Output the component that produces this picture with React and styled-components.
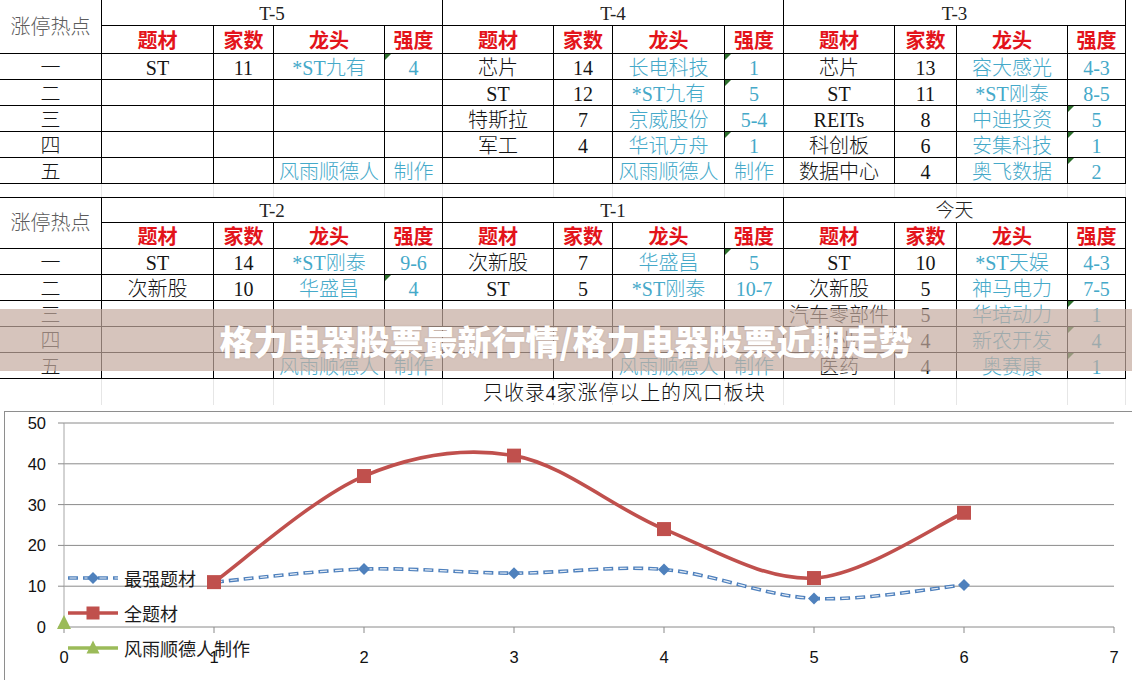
import React from 'react'
import styled, { createGlobalStyle } from 'styled-components'

const GlobalStyle = createGlobalStyle`
  html, body { margin: 0; padding: 0; background: #fff; }
  body { width: 1132px; height: 680px; overflow: hidden; }
`

const COLS = '101px 111px 59px 110px 57px 110px 58px 111px 58px 110px 61px 110px 57px'
const HEADS = ['题材', '家数', '龙头', '强度']
const LABELS = ['一', '二', '三', '四', '五']
const SIGN = ['', '', '风雨顺德人', '制作']

const topGroups = [
  { title: 'T-5', rows: [['ST', '11', '*ST九有', '4', true], [], [], [], SIGN] },
  { title: 'T-4', rows: [['芯片', '14', '长电科技', '1', true], ['ST', '12', '*ST九有', '5', true], ['特斯拉', '7', '京威股份', '5-4'], ['军工', '4', '华讯方舟', '1', true], SIGN] },
  { title: 'T-3', rows: [['芯片', '13', '容大感光', '4-3'], ['ST', '11', '*ST刚泰', '8-5'], ['REITs', '8', '中迪投资', '5', true], ['科创板', '6', '安集科技', '1', true], ['数据中心', '4', '奥飞数据', '2', true]] },
]

const bottomGroups = [
  { title: 'T-2', rows: [['ST', '14', '*ST刚泰', '9-6'], ['次新股', '10', '华盛昌', '4', true], [], [], SIGN] },
  { title: 'T-1', rows: [['次新股', '7', '华盛昌', '5', true], ['ST', '5', '*ST刚泰', '10-7'], [], [], SIGN] },
  { title: '今天', rows: [['ST', '10', '*ST天娱', '4-3'], ['次新股', '5', '神马电力', '7-5'], ['汽车零部件', '5', '华培动力', '1', true], ['农业', '4', '新农开发', '4', true], ['医药', '4', '奥赛康', '1', true]] },
]

const Page = styled.div`
  position: relative;
  width: 1132px;
  height: 680px;
  overflow: hidden;
  font-family: "Liberation Serif", "Noto Sans CJK SC", serif;
`

const Sheet = styled.div`
  display: flex;
  flex-direction: column;
`

const Board = styled.div`
  display: grid;
  grid-template-columns: ${COLS};
  grid-template-rows: ${p => p.$rows};
  gap: 1px;
  background: #000;
  width: max-content;
  padding: ${p => (p.$bordered ? '1px' : '0')} 1px 1px 0;
`

const Cell = styled.div`
  position: relative;
  background: #fff;
  display: flex;
  align-items: center;
  justify-content: center;
  padding-top: 3px;
  font-size: 20px;
  font-weight: 300;
  line-height: 1;
  white-space: nowrap;
  overflow: hidden;
  color: ${p => (p.$blue ? '#45a9c9' : '#141414')};

  ${p => p.$flag && `
    &::before {
      content: '';
      position: absolute;
      top: 0;
      left: 0;
      border-top: 6px solid #2c6e2c;
      border-right: 6px solid transparent;
    }
  `}
`

const Corner = styled(Cell)`
  grid-row: span 2;
  color: #5c5c5c;
  padding-top: 0;
`

const Period = styled(Cell)`
  grid-column: span 4;
  font-size: 19px;
  color: #222;
  padding-top: 1px;
`

const Head = styled(Cell)`
  color: #e3141b;
  font-weight: 700;
`

const FaintRow = styled.div`
  display: grid;
  grid-template-columns: ${COLS};
  grid-template-rows: ${p => p.$h}px;
  gap: 1px;
  background: #e6e6e6;
  width: max-content;
  padding-right: 1px;
`

const FaintCell = styled.div`
  background: #fff;
  grid-row: 1;
  grid-column: ${p => p.$col};
`

const Caption = styled.div`
  grid-row: 1;
  grid-column: 6 / -1;
  justify-self: start;
  align-self: center;
  margin-left: 38px;
  padding: 2px 2px 0;
  background: #fff;
  font-size: 20px;
  font-weight: 300;
  letter-spacing: 0.9px;
  color: #111;
  line-height: 1;
`

const Chart = styled.div`
  position: relative;
  margin: 6px 0 0 4px;
  width: 1140px;
  height: 290px;
  border: 1px solid #8e8e8e;
  background: #fff;
`

const Legend = styled.div`
  position: absolute;
  left: 63px;
  top: 148px;
  display: flex;
  flex-direction: column;
`

const LegendItem = styled.div`
  display: flex;
  align-items: center;
  gap: 6px;
  height: 35px;
`

const LegendLabel = styled.span`
  font-family: "Noto Sans CJK SC", sans-serif;
  font-size: 18px;
  color: #1c1c1c;
  line-height: 1;
`

const Banner = styled.div`
  position: absolute;
  left: 0;
  right: 0;
  top: 309px;
  height: 62px;
  background: rgba(196, 171, 159, 0.7);
  display: flex;
  align-items: center;
  justify-content: center;
  font-family: "Noto Sans CJK SC", sans-serif;
  font-weight: 900;
  font-size: 34px;
  color: #fff;
  text-shadow: 0 0 2px rgba(120, 90, 80, 0.25);
`

const RED = '#c0504d'
const BLUE = '#4f81bd'
const GREEN = '#9bbb59'

const X = i => 64 + 150 * i
const Y = v => 627 - 4.08 * v

const smooth = pts => {
  let d = `M${pts[0][0]},${pts[0][1]}`
  for (let i = 0; i < pts.length - 1; i++) {
    const p0 = pts[i - 1] || pts[i]
    const p1 = pts[i]
    const p2 = pts[i + 1]
    const p3 = pts[i + 2] || p2
    const c1 = [p1[0] + (p2[0] - p0[0]) / 6, p1[1] + (p2[1] - p0[1]) / 6]
    const c2 = [p2[0] - (p3[0] - p1[0]) / 6, p2[1] - (p3[1] - p1[1]) / 6]
    d += ` C${c1[0]},${c1[1]} ${c2[0]},${c2[1]} ${p2[0]},${p2[1]}`
  }
  return d
}

const allThemes = [[1, 11], [2, 37], [3, 42], [4, 24], [5, 12], [6, 28]].map(([i, v]) => [X(i), Y(v)])
const topTheme = [[1, 11], [2, 14.2], [3, 13.2], [4, 14.1], [5, 7], [6, 10.3]].map(([i, v]) => [X(i), Y(v)])

const Diamond = ({ x, y, r = 6 }) => (
  <polygon points={`${x},${y - r} ${x + r},${y} ${x},${y + r} ${x - r},${y}`} fill={BLUE} />
)

const Square = ({ x, y, s = 14 }) => <rect x={x - s / 2} y={y - s / 2} width={s} height={s} fill={RED} />

const Triangle = ({ x, y, s = 14 }) => (
  <polygon points={`${x},${y - s / 2} ${x + s / 2},${y + s / 2} ${x - s / 2},${y + s / 2}`} fill={GREEN} />
)

const DashedLine = ({ d }) => (
  <>
    <path d={d} fill="none" stroke={BLUE} strokeWidth="3.6" strokeDasharray="10 5" />
    <path d={d} fill="none" stroke="#e8eef6" strokeWidth="1.2" strokeDasharray="7 8" strokeDashoffset="-1.5" />
  </>
)

function Block({ groups, first }) {
  return (
    <Board $rows={first ? '25px 27px repeat(5, 25px)' : '24px 25px repeat(5, 25px)'} $bordered={!first}>
      <Corner>涨停热点</Corner>
      {groups.map(g => <Period key={g.title}>{g.title}</Period>)}
      {groups.map(g => HEADS.map(h => <Head key={g.title + h}>{h}</Head>))}
      {LABELS.map((label, r) => (
        <React.Fragment key={label}>
          <Cell>{label}</Cell>
          {groups.map(g => {
            const row = g.rows[r] || []
            return [
              <Cell key={g.title + 'a'}>{row[0]}</Cell>,
              <Cell key={g.title + 'b'}>{row[1]}</Cell>,
              <Cell key={g.title + 'c'} $blue>{row[2]}</Cell>,
              <Cell key={g.title + 'd'} $blue $flag={row[4]}>{row[3]}</Cell>,
            ]
          })}
        </React.Fragment>
      ))}
    </Board>
  )
}

const faintCells = Array.from({ length: 13 }, (_, i) => <FaintCell key={i} $col={i + 1} />)

const App = () => {
  const grid = [10, 20, 30, 40, 50]
  return (
    <Page>
      <GlobalStyle />
      <Sheet>
        <Block groups={topGroups} first />
        <FaintRow $h={13}>{faintCells}</FaintRow>
        <Block groups={bottomGroups} />
        <FaintRow $h={26}>
          {faintCells}
          <Caption>只收录4家涨停以上的风口板块</Caption>
        </FaintRow>
      </Sheet>

      <Chart>
        <svg width="1139" height="289" viewBox="5 412 1139 289">
          {grid.map(v => (
            <line key={v} x1={64} x2={X(7)} y1={Y(v)} y2={Y(v)} stroke="#8a8a8a" strokeWidth="1" />
          ))}
          <line x1={64} x2={X(7)} y1={Y(0)} y2={Y(0)} stroke="#8a8a8a" strokeWidth="1" />
          <line x1={64} x2={64} y1={Y(50)} y2={Y(0)} stroke="#a6a6a6" strokeWidth="1" />
          {[0, ...grid].map(v => (
            <line key={'t' + v} x1={58} x2={64} y1={Y(v)} y2={Y(v)} stroke="#8a8a8a" />
          ))}
          {[0, 1, 2, 3, 4, 5, 6, 7].map(i => (
            <line key={'x' + i} x1={X(i)} x2={X(i)} y1={Y(0)} y2={Y(0) + 6} stroke="#8a8a8a" />
          ))}
          <g fontFamily="Liberation Sans, sans-serif" fontSize="16.5" fill="#111">
            {[0, ...grid].map(v => (
              <text key={'l' + v} x={46} y={Y(v) + 6} textAnchor="end">{v}</text>
            ))}
            {[0, 1, 2, 3, 4, 5, 6, 7].map(i => (
              <text key={'n' + i} x={X(i)} y={663} textAnchor="middle">{i}</text>
            ))}
          </g>

          <DashedLine d={smooth(topTheme)} />
          {topTheme.slice(1).map(([x, y]) => <Diamond key={x} x={x} y={y} />)}

          <path d={smooth(allThemes)} fill="none" stroke={RED} strokeWidth="3.6" />
          {allThemes.map(([x, y]) => <Square key={x} x={x} y={y} />)}

          <Triangle x={64} y={622} />
        </svg>

        <Legend>
          <LegendItem>
            <svg width="50" height="20">
              <line x1="0" x2="50" y1="10" y2="10" stroke={BLUE} strokeWidth="3.6" strokeDasharray="10 5" />
              <line x1="0" x2="50" y1="10" y2="10" stroke="#e8eef6" strokeWidth="1.2" strokeDasharray="7 8" strokeDashoffset="-1.5" />
              <Diamond x={25} y={10} />
            </svg>
            <LegendLabel>最强题材</LegendLabel>
          </LegendItem>
          <LegendItem>
            <svg width="50" height="20">
              <line x1="0" x2="50" y1="10" y2="10" stroke={RED} strokeWidth="3.6" />
              <Square x={25} y={10} s={13} />
            </svg>
            <LegendLabel>全题材</LegendLabel>
          </LegendItem>
          <LegendItem>
            <svg width="50" height="20">
              <line x1="0" x2="50" y1="10" y2="10" stroke={GREEN} strokeWidth="3.6" />
              <Triangle x={25} y={9} s={13} />
            </svg>
            <LegendLabel>风雨顺德人制作</LegendLabel>
          </LegendItem>
        </Legend>
      </Chart>

      <Banner>格力电器股票最新行情/格力电器股票近期走势</Banner>
    </Page>
  )
}

export default App
